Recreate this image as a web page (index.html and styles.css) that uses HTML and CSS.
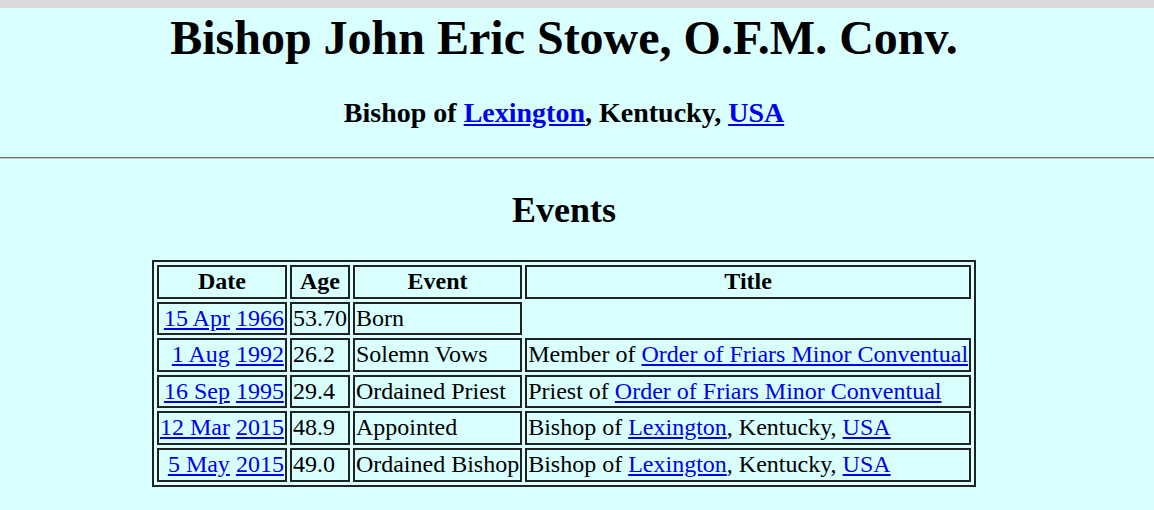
FILE: index.html
```html
<!DOCTYPE html>
<html lang="en">
<head>
  <meta charset="utf-8">
  <title>Bishop John Eric Stowe, O.F.M. Conv.</title>
  <link rel="stylesheet" href="styles.css">
</head>
<body>
<div class="topbar"></div>

<div class="head">
  <h1>Bishop John Eric Stowe, O.F.M. Conv.</h1>
  <h3>Bishop of <a href="#">Lexington</a>, Kentucky, <a href="#">USA</a></h3>
</div>

<hr>

<div class="main">
  <h2>Events</h2>
  <table class="events">
    <tr>
      <th>Date</th>
      <th>Age</th>
      <th>Event</th>
      <th>Title</th>
    </tr>
    <tr>
      <td class="date"><a href="#">15 Apr</a> <a href="#">1966</a></td>
      <td>53.70</td>
      <td>Born</td>
    </tr>
    <tr>
      <td class="date"><a href="#">1 Aug</a> <a href="#">1992</a></td>
      <td>26.2</td>
      <td>Solemn Vows</td>
      <td>Member of <a href="#">Order of Friars Minor Conventual</a></td>
    </tr>
    <tr>
      <td class="date"><a href="#">16 Sep</a> <a href="#">1995</a></td>
      <td>29.4</td>
      <td>Ordained Priest</td>
      <td>Priest of <a href="#">Order of Friars Minor Conventual</a></td>
    </tr>
    <tr>
      <td class="date"><a href="#">12 Mar</a> <a href="#">2015</a></td>
      <td>48.9</td>
      <td>Appointed</td>
      <td>Bishop of <a href="#">Lexington</a>, Kentucky, <a href="#">USA</a></td>
    </tr>
    <tr>
      <td class="date"><a href="#">5 May</a> <a href="#">2015</a></td>
      <td>49.0</td>
      <td>Ordained Bishop</td>
      <td>Bishop of <a href="#">Lexington</a>, Kentucky, <a href="#">USA</a></td>
    </tr>
  </table>
</div>
</body>
</html>
```

FILE: styles.css
```css
body {
  margin: 0;
  background: #d9ffff;
  color: #000;
  font-family: "Liberation Serif", "Times New Roman", serif;
  font-size: 24px;
}
a {
  color: #0000ee;
}
.topbar {
  height: 8px;
  background: #dadada;
}
.head,
.main {
  padding-right: 26px;
  text-align: center;
}
.head h1 {
  font-size: 48px;
  margin: 2px 0 32px;
}
.head h3 {
  font-size: 28px;
  margin: 28px 0;
}
hr {
  margin: 12px 0;
  height: 0;
  border: none;
  border-top: 1px solid #6a7070;
  border-bottom: 1px solid #c6cccc;
}
.main h2 {
  font-size: 36px;
  margin: 30px 0 29px;
}
.events {
  margin: 0 auto;
  border: 2px solid #222;
  border-spacing: 3px;
  text-align: left;
}
.events th,
.events td {
  border: 2px solid #222;
  padding: 1px;
  line-height: 27.6px;
  white-space: nowrap;
}
.events th {
  text-align: center;
}
.events td.date {
  text-align: right;
}
```
